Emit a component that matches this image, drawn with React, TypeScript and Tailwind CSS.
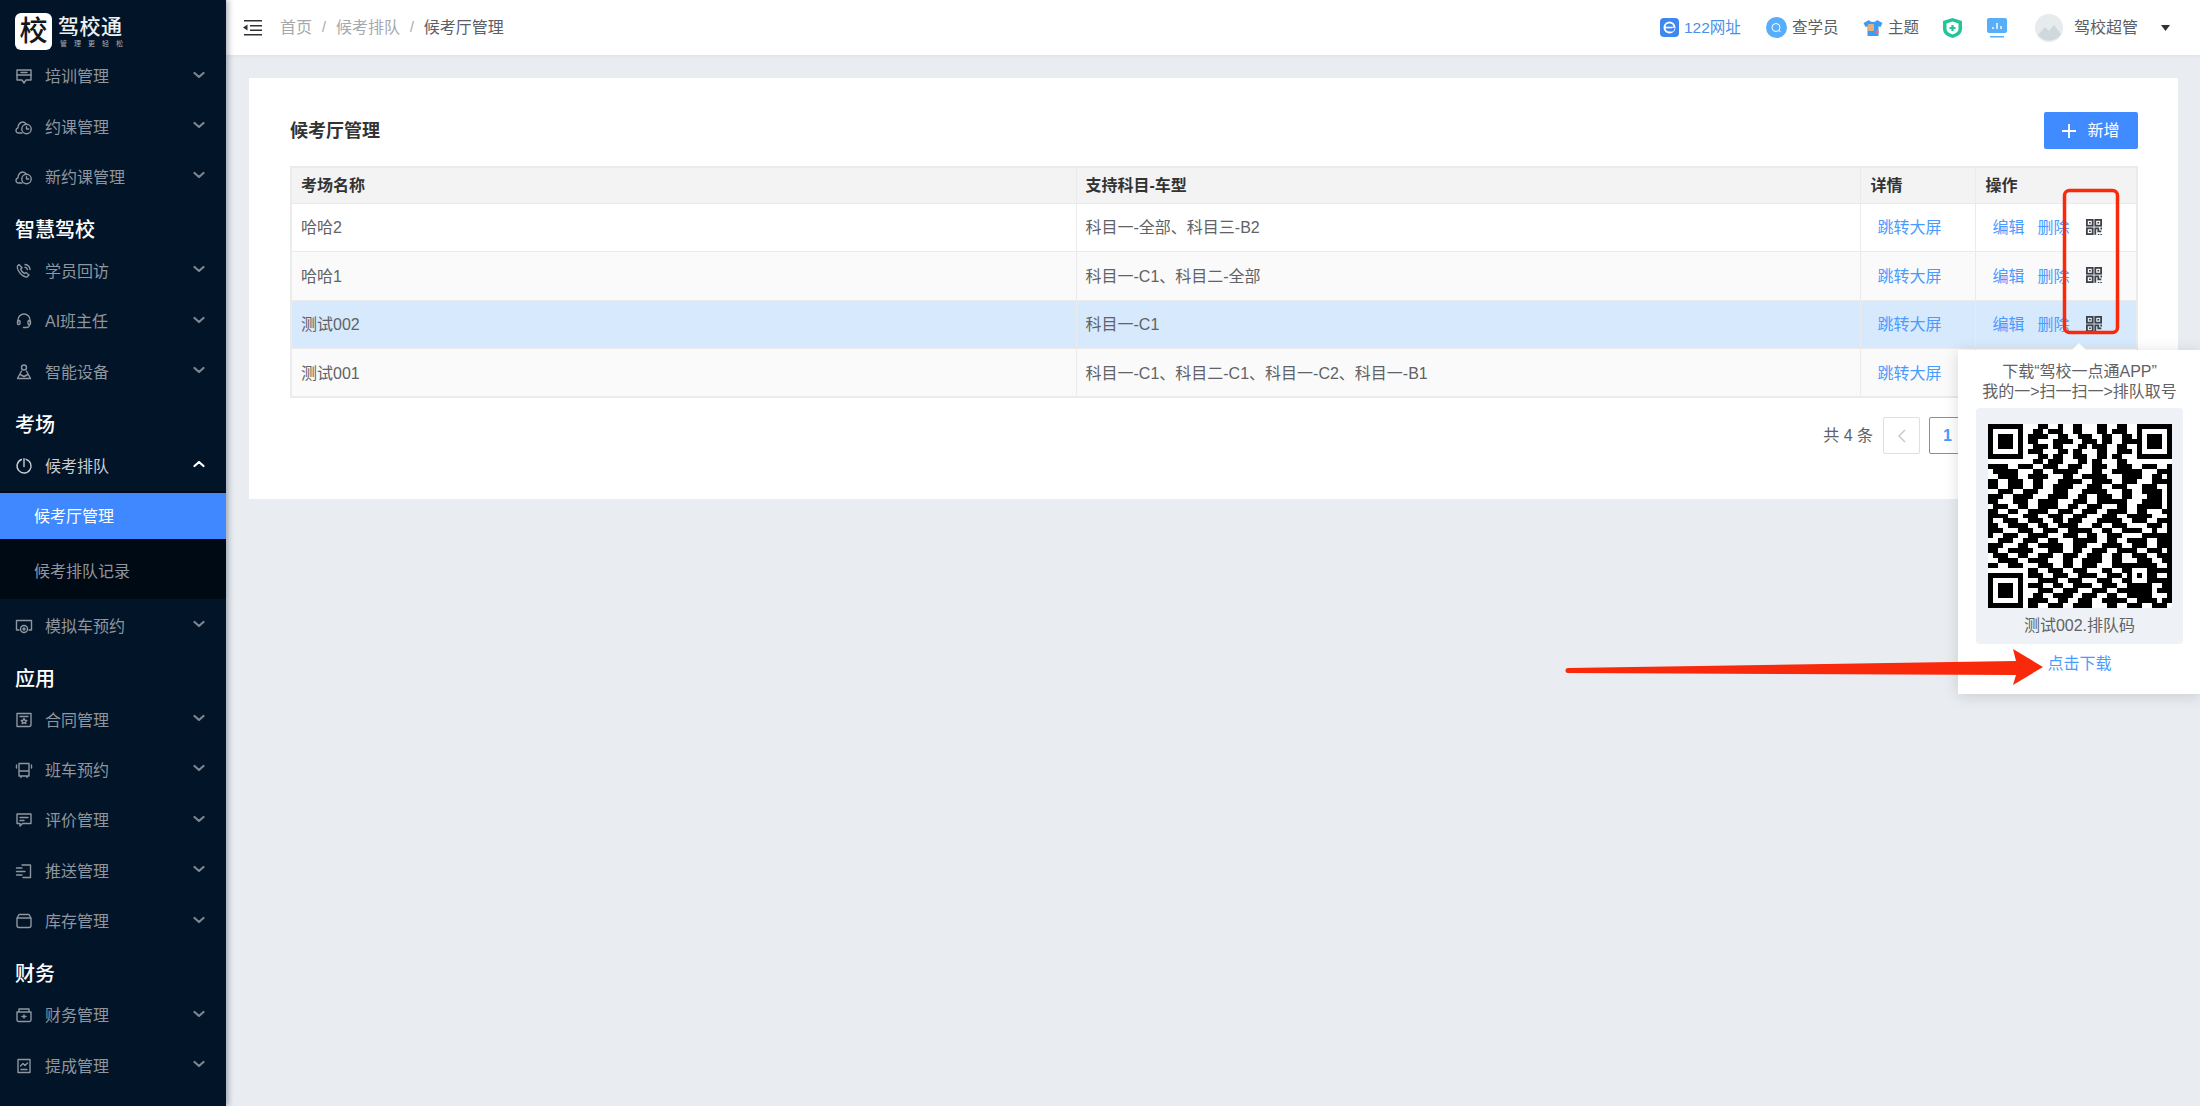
import { ReactNode } from 'react'

type MenuRow =
  | { kind: 'item'; label: string; icon: ReactNode; open?: boolean }
  | { kind: 'section'; label: string }
  | { kind: 'sub' }

const Ico = ({ children }: { children: ReactNode }) => (
  <svg
    width="18"
    height="18"
    viewBox="0 0 18 18"
    fill="none"
    stroke="currentColor"
    strokeWidth="1.4"
    strokeLinecap="round"
    strokeLinejoin="round"
  >
    {children}
  </svg>
)

const cloudClock = (
  <Ico>
    <path d="M7 15H3.500C2 15 1 13.800 1 12.400c0-1.200.8-2.200 1.900-2.500C3 6.800 5 4 7.600 4c1.700 0 3 1 3.700 2.400" />
    <circle cx="11.500" cy="11" r="4.700" />
    <path d="M11.500 8.700V11h2.200" />
  </Ico>
)

const menu: MenuRow[] = [
  {
    kind: 'item',
    label: '培训管理',
    icon: (
      <Ico>
        <path d="M2 3h14v10H11l-2 3-2-3H2z" />
        <path d="M2 8h14M6 5.500h6" />
      </Ico>
    ),
  },
  { kind: 'item', label: '约课管理', icon: cloudClock },
  { kind: 'item', label: '新约课管理', icon: cloudClock },
  { kind: 'section', label: '智慧驾校' },
  {
    kind: 'item',
    label: '学员回访',
    icon: (
      <Ico>
        <path d="M4 2.500 2.500 4c-1 4 4.500 11 9.500 11l2-2-3-2.500-1.500 1C7.500 10.500 6 8.500 5.700 7l1.300-1.300z" />
        <path d="M10 2.500c2.800.3 4.700 2.300 5 5M10 5.300c1.300.2 2.200 1 2.400 2.300" />
      </Ico>
    ),
  },
  {
    kind: 'item',
    label: 'AI班主任',
    icon: (
      <Ico>
        <path d="M3 10V8a6 6 0 0 1 12 0v2" />
        <rect x="2.500" y="8.500" width="2.500" height="4" rx="1" />
        <rect x="13" y="8.500" width="2.500" height="4" rx="1" />
        <path d="M14.500 12.500c0 2-1.500 3-3.500 3H8.500" />
      </Ico>
    ),
  },
  {
    kind: 'item',
    label: '智能设备',
    icon: (
      <Ico>
        <circle cx="9" cy="4.500" r="2.500" />
        <path d="M6.500 8 2.500 15.500h13L11.500 8M5 11.500l4 2 4-2" />
      </Ico>
    ),
  },
  { kind: 'section', label: '考场' },
  {
    kind: 'item',
    label: '候考排队',
    open: true,
    icon: (
      <Ico>
        <path d="M11 2.300A7 7 0 1 1 6.500 2.500" />
        <path d="M9 1.800V9.500" />
      </Ico>
    ),
  },
  { kind: 'sub' },
  {
    kind: 'item',
    label: '模拟车预约',
    icon: (
      <Ico>
        <path d="M4 13H1.500V3.500h15V13H14" />
        <circle cx="9" cy="12" r="3.500" />
        <circle cx="9" cy="12" r="1" />
      </Ico>
    ),
  },
  { kind: 'section', label: '应用' },
  {
    kind: 'item',
    label: '合同管理',
    icon: (
      <Ico>
        <path d="M2 2.500h14v11a2 2 0 0 1-2 2H2z" />
        <path d="M5 5.500h8M9 7.500l1 1.800 1.800.2-1.300 1.300.3 1.800L9 11.700l-1.800.9.300-1.800-1.300-1.300 1.800-.2z" />
      </Ico>
    ),
  },
  {
    kind: 'item',
    label: '班车预约',
    icon: (
      <Ico>
        <path d="M4 2.500h10v12.500H4zM4 10h10M1.500 4v3M16.500 4v3M6 15v1.500M12 15v1.500" />
      </Ico>
    ),
  },
  {
    kind: 'item',
    label: '评价管理',
    icon: (
      <Ico>
        <path d="M2 3h14v9.500H7.500L5 15v-2.500H2z" />
        <path d="M5 6.500h8M5 9.500h4" />
      </Ico>
    ),
  },
  {
    kind: 'item',
    label: '推送管理',
    icon: (
      <Ico>
        <path d="M7 3h8.500v12.500H8M1.500 6H7M1.500 9.500H10M1.500 13H7" />
      </Ico>
    ),
  },
  {
    kind: 'item',
    label: '库存管理',
    icon: (
      <Ico>
        <path d="M4 2.500h10L16 6v7.500a2 2 0 0 1-2 2H4a2 2 0 0 1-2-2V6zM2 6h14" />
      </Ico>
    ),
  },
  { kind: 'section', label: '财务' },
  {
    kind: 'item',
    label: '财务管理',
    icon: (
      <Ico>
        <path d="M4 3h10v3H4zM2 6h14v8a1.500 1.500 0 0 1-1.500 1.500h-11A1.500 1.500 0 0 1 2 14zM7 10.500h4M9 9v3" />
      </Ico>
    ),
  },
  {
    kind: 'item',
    label: '提成管理',
    icon: (
      <Ico>
        <path d="M3 2.500h12v13H3zM5.500 9l2.500-2.500 2 2 2.500-2.500M6 12.500h6" />
      </Ico>
    ),
  },
]

const Chevron = ({ up }: { up?: boolean }) => (
  <svg width="12" height="8" viewBox="0 0 12 8" fill="none" className="mt-[-3px]">
    <path
      d={up ? 'M1.500 6 6 2l4.500 4' : 'M1.500 2 6 6l4.500-4'}
      stroke="currentColor"
      strokeWidth="2.200"
      strokeLinecap="round"
      strokeLinejoin="round"
    />
  </svg>
)

const Sidebar = () => (
  <aside className="relative z-10 w-[226px] shrink-0 overflow-hidden bg-[#021428] shadow-[2px_0_6px_rgba(0,21,41,0.35)]">
    <div className="flex h-[51px] items-start pl-[15px] pt-[13px]">
      <div className="flex h-[37px] w-[37px] items-center justify-center rounded-[6px] bg-white text-[28px] leading-none font-medium text-[#14171c]">
        校
      </div>
      <div className="ml-[6px] mt-[3px] text-white">
        <div className="text-[21px] leading-[22px] font-medium tracking-[0.5px] text-[#eef0f2]">驾校通</div>
        <div className="mt-[2px] ml-[2px] text-[7px] leading-[8px] tracking-[7px] whitespace-nowrap text-[#a9afb7]">
          管理更轻松
        </div>
      </div>
    </div>
    {menu.map((row, i) => {
      if (row.kind === 'section') {
        return (
          <div
            key={i}
            className="h-[43.600px] pl-[15px] pt-[18px] text-[20px] leading-[20px] font-medium text-white"
          >
            {row.label}
          </div>
        )
      }
      if (row.kind === 'sub') {
        return (
          <div key={i} className="mb-[1.500px] h-[108px] bg-[#000a14] pt-[2px] text-[16px]">
            <div className="flex h-[46px] items-center bg-[#4088ff] pl-[34px] pt-[2px] text-white">候考厅管理</div>
            <div className="flex h-[60px] items-center pl-[34px] pt-[6px] text-[#8f969f]">候考排队记录</div>
          </div>
        )
      }
      return (
        <div
          key={i}
          className={`flex h-[50.400px] items-center pl-[15px] pr-[21px] text-[16px] ${
            row.open ? 'text-[#c9cdd2]' : 'text-[#8f969f]'
          }`}
        >
          <span className="w-[30px] shrink-0">{row.icon}</span>
          <span className="flex-1 pt-[2px]">{row.label}</span>
          <span className={row.open ? 'text-white' : 'text-[#7d8590]'}>
            <Chevron up={row.open} />
          </span>
        </div>
      )
    })}
  </aside>
)

const TopIcons = () => (
  <div className="ml-auto flex items-center text-[15.500px] whitespace-nowrap text-[#5a5e66]">
    <svg width="19" height="19" viewBox="0 0 19 19" className="mr-[5px]">
      <rect width="19" height="19" rx="4" fill="#3f86ef" />
      <circle cx="9.500" cy="9.500" r="5" fill="none" stroke="#fff" strokeWidth="2" />
      <path d="M5 9.500h9" stroke="#fff" strokeWidth="1.600" />
      <path d="M15 9.800h-2.500l-2 4 3-.5z" fill="#3f86ef" />
    </svg>
    <span className="w-[60px] text-[#4a8fe8]">122网址</span>
    <svg width="21" height="21" viewBox="0 0 21 21" className="ml-[22px] mr-[5px]">
      <circle cx="10.500" cy="10.500" r="10.500" fill="#56aefc" />
      <circle cx="10" cy="10.500" r="4" fill="none" stroke="#fff" strokeWidth="1" />
      <path d="m13 13.500 1.500 1.500" stroke="#fff" />
    </svg>
    <span className="w-[46px]">查学员</span>
    <svg width="20" height="20" viewBox="0 0 20 20" className="ml-[25px] mr-[5px]">
      <path d="M6 2 0.500 5l2 4 2-.8V18h11V8.200l2 .8 2-4L14 2c-1 2.500-7 2.500-8 0z" fill="#3b9cf5" />
      <rect x="5" y="6" width="6" height="7" rx="1" fill="#e3b27c" />
      <circle cx="14" cy="14" r="1.800" fill="#f0715a" />
    </svg>
    <span className="w-[32px]">主题</span>
    <svg width="19" height="20" viewBox="0 0 19 20" className="ml-[23px]">
      <path d="M9.500 0 19 3v8c0 4.500-4 7.500-9.500 9C4 18.500 0 15.500 0 11V3z" fill="#22c498" />
      <path d="M9.500 3.500 15.500 5.500v5.500c0 2.500-2.500 4.500-6 5.500-3.500-1-6-3-6-5.500V5.500z" fill="#fff" />
      <path d="M9.500 7v6M6.500 10h6" stroke="#22c498" strokeWidth="2.200" />
    </svg>
    <svg width="20" height="20" viewBox="0 0 20 20" className="ml-[25px]">
      <rect width="20" height="15" rx="2" fill="#58aef8" />
      <path d="M6 11V9M10 11V5M14 11V8" stroke="#fff" strokeWidth="1.400" />
      <rect x="3" y="18" width="14" height="1.500" fill="#58aef8" />
    </svg>
    <svg width="28" height="28" viewBox="0 0 28 28" className="ml-[28px]">
      <circle cx="14" cy="14" r="14" fill="#e6ebee" />
      <path d="M3 21 10 13l4 4 5-6 7 9a14 14 0 0 1-23 1z" fill="#cfd8dd" />
    </svg>
    <span className="ml-[11px] w-[64px] text-[16px]">驾校超管</span>
    <svg width="9" height="6" viewBox="0 0 9 6" className="ml-[23px] mr-[30px]">
      <path d="M0 0h9L4.500 6z" fill="#303133" />
    </svg>
  </div>
)

const Header = () => (
  <header className="flex h-[55px] shrink-0 items-center bg-white pl-[17px] shadow-[0_1px_4px_rgba(0,21,41,0.05)]">
    <svg width="19" height="16" viewBox="0 0 19 16" className="mr-[18px]" fill="#303133">
      <rect x="1" y="0" width="18" height="1.500" />
      <rect x="7" y="5" width="12" height="1.500" />
      <rect x="7" y="9.500" width="12" height="1.500" />
      <rect x="1" y="14" width="18" height="1.500" />
      <path d="M4.500 4.500v6L0 7.500z" />
    </svg>
    <nav className="flex items-center text-[16px] text-[#a5a8ad]">
      <span>首页</span>
      <span className="mx-[10px] text-[14px] text-[#a5a8ad]">/</span>
      <span>候考排队</span>
      <span className="mx-[10px] text-[14px] text-[#a5a8ad]">/</span>
      <span className="text-[#5a5e66]">候考厅管理</span>
    </nav>
    <TopIcons />
  </header>
)

const halls = [
  { name: '哈哈2', subjects: '科目一-全部、科目三-B2' },
  { name: '哈哈1', subjects: '科目一-C1、科目二-全部' },
  { name: '测试002', subjects: '科目一-C1', active: true },
  { name: '测试001', subjects: '科目一-C1、科目二-C1、科目一-C2、科目一-B1' },
]

const ScanIcon = () => (
  <svg width="16" height="16" viewBox="0 0 16 16" fill="none" stroke="#3d4248" strokeWidth="1.800">
    <rect x="0.900" y="0.900" width="5.800" height="5.800" />
    <rect x="9.300" y="0.900" width="5.800" height="5.800" />
    <rect x="0.900" y="9.300" width="5.800" height="5.800" />
    <path d="M3 3.800h1.800M11.400 3.800h1.800M3 12.200h1.800" strokeWidth="1.500" />
    <path d="M9.300 15.800V9.300h3v3h3M15.300 8.500v2M11.800 15.800h1.500M14.300 15.800h1.500" />
  </svg>
)

const HallTable = () => (
  <table className="w-[1848px] table-fixed border-collapse border-2 border-[#ebebeb] text-[16px] text-[#606266]">
    <colgroup>
      <col className="w-[785px]" />
      <col className="w-[784px]" />
      <col className="w-[115px]" />
      <col />
    </colgroup>
    <thead>
      <tr className="h-[36px] bg-[#f3f3f3] text-left text-[#333333]">
        <th className="border border-[#ebebeb] px-[9px] pt-[2px] font-semibold">考场名称</th>
        <th className="border border-[#ebebeb] px-[9px] pt-[2px] font-semibold">支持科目-车型</th>
        <th className="border border-[#ebebeb] px-[10px] pt-[2px] font-semibold">详情</th>
        <th className="border border-[#ebebeb] px-[10px] pt-[2px] font-semibold">操作</th>
      </tr>
    </thead>
    <tbody>
      {halls.map((hall, i) => (
        <tr
          key={hall.name}
          className={`h-[48.500px] ${
            hall.active ? 'bg-[#d7e9fc]' : i % 2 === 1 ? 'bg-[#fafafa]' : 'bg-white'
          }`}
        >
          <td className="border border-[#ebebeb] px-[9px] pt-[2px]">{hall.name}</td>
          <td className="border border-[#ebebeb] px-[9px] pt-[2px]">{hall.subjects}</td>
          <td className="border border-[#ebebeb] px-[17px] pt-[2px] text-[#4a9bff]">跳转大屏</td>
          <td className="border border-[#ebebeb] pl-[17px] pt-[2px]">
            <div className="flex items-center text-[#4a9bff]">
              <span>编辑</span>
              <span className="ml-[13px]">删除</span>
              <span className="ml-[16px] mt-[-3px]">
                <ScanIcon />
              </span>
            </div>
          </td>
        </tr>
      ))}
    </tbody>
  </table>
)

const Pagination = () => (
  <div className="mt-[19px] flex items-center justify-end text-[16px] text-[#606266]">
    <span className="mr-[10px]">共 4 条</span>
    <button className="flex h-[37px] w-[37px] items-center justify-center rounded-[2px] border border-[#dcdfe6] text-[#c0c4cc]">
      <svg width="10" height="14" viewBox="0 0 10 14" fill="none" stroke="currentColor" strokeWidth="1.300">
        <path d="M8 1 2 7l6 6" />
      </svg>
    </button>
    <button className="ml-[9px] h-[37px] w-[37px] rounded-[2px] border border-[#4a9bff] font-semibold text-[#4a9bff]">
      1
    </button>
    <button className="ml-[9px] h-[37px] w-[37px] rounded-[2px] border border-[#dcdfe6]" />
    <div className="ml-[9px] h-[37px] w-[117px]" />
  </div>
)

const qrData = [
  '0000000000110010011000110011000000000',
  '0000000001101110011000110111000000000',
  '0000000011110011001110011001100000000',
  '0000000011000111100111011001110000000',
  '0000000001110110001101110011000000000',
  '0000000011100011011000110011100000000',
  '0000000000110110011100110110000000000',
  '0000000001101110001101100011000000000',
  '1111001110011100111001110011100111001',
  '0111110001100111110001100111111000111',
  '0011110011110001100111110001111001101',
  '1100111001100011111001111001110001111',
  '1100111001100111100011100111000111001',
  '0011100111000111000111110001100111101',
  '1110011110001111001100111001100011101',
  '1100011100111100011100111111000111101',
  '0111001100111100110011100011001111101',
  '1100110011110011100111001111001100011',
  '1111000111001110011100011100111110001',
  '1001110011100110111000111110011100111',
  '1100111100110011110001100111000011101',
  '1110001110011100111110011001111001001',
  '1001110011110001110011001110000111111',
  '0011100111001100011111001100111100111',
  '1110001100111110011100011110011100111',
  '1100111110001110011001110011110011101',
  '0111001100111001110011100110011100111',
  '0011110011110001100111100110001110011',
  '1100111000111001100111000111111111001',
  '0000000011001110011100011001100011111',
  '0000000011100111001111001110011111001',
  '0000000000111100111000111001111001111',
  '0000000011100110011110011100111110011',
  '0000000000111001110001110011111110111',
  '0000000001100111100111001100111110001',
  '0000000011110011001110011111001111011',
  '0000000011001110011110001100111001110',
]

const finder = (r: number, c: number) => {
  const d = Math.max(Math.abs(r - 3), Math.abs(c - 3))
  return d === 3 || d <= 1
}

const qrPath = () => {
  let d = ''
  for (let r = 0; r < 37; r++) {
    for (let c = 0; c < 37; c++) {
      let on = qrData[r][c] === '1'
      if (r < 7 && c < 7) on = finder(r, c)
      if (r < 7 && c >= 30) on = finder(r, c - 30)
      if (r >= 30 && c < 7) on = finder(r - 30, c)
      if (r >= 28 && r <= 32 && c >= 28 && c <= 32) {
        const a = Math.max(Math.abs(r - 30), Math.abs(c - 30))
        on = a !== 1
      }
      if (on) d += `M${c} ${r}h1v1h-1z`
    }
  }
  return d
}

const QrPopover = () => (
  <div className="absolute left-[1958px] top-[350px] z-20 h-[344px] w-[243px] bg-white px-[18px] pt-[12px] text-[16px] text-[#606266] shadow-[0_2px_14px_rgba(0,0,0,0.14)]">
    <div className="absolute left-[116px] top-[-5px] h-[10px] w-[10px] rotate-45 bg-white" />
    <p className="text-center leading-[20px] whitespace-nowrap">
      下载“驾校一点通APP”
      <br />
      我的一&gt;扫一扫一&gt;排队取号
    </p>
    <div className="mt-[6px] h-[236px] w-[207px] rounded-[4px] bg-[#eef1f5] pt-[16px]">
      <div className="mx-auto h-[184px] w-[184px] bg-white">
        <svg width="184" height="184" viewBox="0 0 37 37" shapeRendering="crispEdges">
          <path d={qrPath()} fill="#000" />
        </svg>
      </div>
      <p className="mt-[8px] text-center leading-[20px]">测试002.排队码</p>
    </div>
    <p className="mt-[10px] text-center leading-[20px] text-[#4a9bff]">点击下载</p>
  </div>
)

// red marks drawn on top of the screenshot
const Annotations = () => (
  <svg width="2200" height="1106" viewBox="0 0 2200 1106" fill="none" className="pointer-events-none absolute left-0 top-0 z-30">
    <rect x="2064.500" y="190.500" width="53" height="142" rx="5" stroke="#f9290b" strokeWidth="3.500" />
    <path d="M1568 668 2016 661 2013 649 2043 667 2013 685 2016 675 1568 673a2.500 2.500 0 0 1 0-5z" fill="#f9290b" />
  </svg>
)

const App = () => (
  <div className="relative flex h-screen w-full overflow-hidden bg-[#e9edf2] font-['Liberation_Sans','Noto_Sans_CJK_SC',sans-serif]">
    <Sidebar />
    <div className="flex min-w-0 flex-1 flex-col">
      <Header />
      <main className="flex-1 pl-[23px] pr-[22px] pt-[23px]">
        <section className="h-[421px] bg-white pl-[41px] pr-[40px] pt-[34px]">
          <div className="mb-[17px] flex h-[37px] items-center justify-between">
            <h2 className="pt-[2px] text-[18px] font-semibold text-[#333333]">候考厅管理</h2>
            <button className="flex h-[37px] w-[94px] items-center justify-center rounded-[2px] bg-[#3f8bff] pt-[1px] text-[16px] text-white">
              <svg width="14" height="14" viewBox="0 0 14 14" className="mr-[11px]" stroke="#fff" strokeWidth="1.800">
                <path d="M7 0v14M0 7h14" />
              </svg>
              新增
            </button>
          </div>
          <HallTable />
          <Pagination />
        </section>
      </main>
    </div>
    <QrPopover />
    <Annotations />
  </div>
)

export default App
